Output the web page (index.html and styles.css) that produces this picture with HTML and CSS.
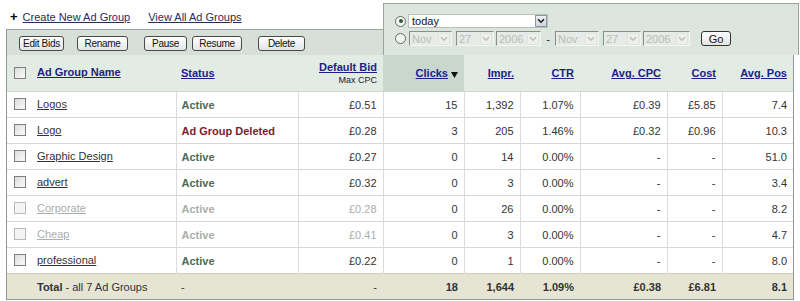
FILE: index.html
```html
<!DOCTYPE html>
<html>
<head>
<meta charset="utf-8">
<link rel="stylesheet" href="styles.css">
</head>
<body>
<div class="top">
  <div class="top-left">
    <div class="links">
      <span class="plus">+</span>
      <a class="toplink" href="#">Create New Ad Group</a>
      <a class="toplink second" href="#">View All Ad Groups</a>
    </div>
    <div class="toolbar">
      <span class="btn w-edit">Edit Bids</span>
      <span class="btn w-rename">Rename</span>
      <span class="btn w-pause">Pause</span>
      <span class="btn w-resume">Resume</span>
      <span class="btn w-delete">Delete</span>
    </div>
  </div>
  <div class="panel">
    <div class="prow">
      <span class="radio on"><span class="dot"></span></span>
      <span class="sel today"><span class="sel-text">today</span><span class="arrow"><svg width="8" height="6" viewBox="0 0 8 6"><path d="M1 1.2 L4 4.2 L7 1.2" fill="none" stroke="#222" stroke-width="1.6"/></svg></span></span>
    </div>
    <div class="prow second-row">
      <span class="radio"></span>
      <span class="sel dis w-mon"><span class="sel-text">Nov</span><span class="arrow dim"><svg width="8" height="6" viewBox="0 0 8 6"><path d="M1 1.2 L4 4.2 L7 1.2" fill="none" stroke="#bbb" stroke-width="1.4"/></svg></span></span>
      <span class="sel dis w-day"><span class="sel-text">27</span><span class="arrow dim"><svg width="8" height="6" viewBox="0 0 8 6"><path d="M1 1.2 L4 4.2 L7 1.2" fill="none" stroke="#bbb" stroke-width="1.4"/></svg></span></span>
      <span class="sel dis w-year"><span class="sel-text">2006</span><span class="arrow dim"><svg width="8" height="6" viewBox="0 0 8 6"><path d="M1 1.2 L4 4.2 L7 1.2" fill="none" stroke="#bbb" stroke-width="1.4"/></svg></span></span>
      <span class="dash">-</span>
      <span class="sel dis w-mon2"><span class="sel-text">Nov</span><span class="arrow dim"><svg width="8" height="6" viewBox="0 0 8 6"><path d="M1 1.2 L4 4.2 L7 1.2" fill="none" stroke="#bbb" stroke-width="1.4"/></svg></span></span>
      <span class="sel dis w-day"><span class="sel-text">27</span><span class="arrow dim"><svg width="8" height="6" viewBox="0 0 8 6"><path d="M1 1.2 L4 4.2 L7 1.2" fill="none" stroke="#bbb" stroke-width="1.4"/></svg></span></span>
      <span class="sel dis w-year2"><span class="sel-text">2006</span><span class="arrow dim"><svg width="8" height="6" viewBox="0 0 8 6"><path d="M1 1.2 L4 4.2 L7 1.2" fill="none" stroke="#bbb" stroke-width="1.4"/></svg></span></span>
      <span class="btn go">Go</span>
    </div>
  </div>
</div>
<div class="grid-wrap">
  <table class="grid">
    <colgroup>
      <col class="c-name"><col class="c-status"><col class="c-bid"><col class="c-clicks"><col class="c-impr"><col class="c-ctr"><col class="c-cpc"><col class="c-cost"><col class="c-pos">
    </colgroup>
    <thead>
      <tr>
        <th class="name"><span class="cb"></span><a href="#">Ad Group Name</a></th>
        <th class="left"><a href="#">Status</a></th>
        <th class="num"><a href="#">Default Bid</a><span class="sub">Max CPC</span></th>
        <th class="num sorted"><a href="#">Clicks</a><svg class="tri" width="7" height="7" viewBox="0 0 7 7"><path d="M0 1 L7 1 L3.5 7 Z" fill="#111"/></svg></th>
        <th class="num"><a href="#">Impr.</a></th>
        <th class="num"><a href="#">CTR</a></th>
        <th class="num"><a href="#">Avg. CPC</a></th>
        <th class="num"><a href="#">Cost</a></th>
        <th class="num"><a href="#">Avg. Pos</a></th>
      </tr>
    </thead>
    <tbody>
      <tr>
        <td class="name"><span class="cb"></span><a href="#">Logos</a></td>
        <td class="status active">Active</td>
        <td class="num">£0.51</td><td class="num">15</td><td class="num">1,392</td><td class="num">1.07%</td><td class="num">£0.39</td><td class="num">£5.85</td><td class="num">7.4</td>
      </tr>
      <tr>
        <td class="name"><span class="cb"></span><a href="#">Logo</a></td>
        <td class="status deleted">Ad Group Deleted</td>
        <td class="num">£0.28</td><td class="num">3</td><td class="num">205</td><td class="num">1.46%</td><td class="num">£0.32</td><td class="num">£0.96</td><td class="num">10.3</td>
      </tr>
      <tr>
        <td class="name"><span class="cb"></span><a href="#">Graphic Design</a></td>
        <td class="status active">Active</td>
        <td class="num">£0.27</td><td class="num">0</td><td class="num">14</td><td class="num">0.00%</td><td class="num">-</td><td class="num">-</td><td class="num">51.0</td>
      </tr>
      <tr>
        <td class="name"><span class="cb"></span><a href="#">advert</a></td>
        <td class="status active">Active</td>
        <td class="num">£0.32</td><td class="num">0</td><td class="num">3</td><td class="num">0.00%</td><td class="num">-</td><td class="num">-</td><td class="num">3.4</td>
      </tr>
      <tr class="paused">
        <td class="name"><span class="cb"></span><a href="#">Corporate</a></td>
        <td class="status active">Active</td>
        <td class="num bid">£0.28</td><td class="num">0</td><td class="num">26</td><td class="num">0.00%</td><td class="num">-</td><td class="num">-</td><td class="num">8.2</td>
      </tr>
      <tr class="paused">
        <td class="name"><span class="cb"></span><a href="#">Cheap</a></td>
        <td class="status active">Active</td>
        <td class="num bid">£0.41</td><td class="num">0</td><td class="num">3</td><td class="num">0.00%</td><td class="num">-</td><td class="num">-</td><td class="num">4.7</td>
      </tr>
      <tr>
        <td class="name"><span class="cb"></span><a href="#">professional</a></td>
        <td class="status active">Active</td>
        <td class="num">£0.22</td><td class="num">0</td><td class="num">1</td><td class="num">0.00%</td><td class="num">-</td><td class="num">-</td><td class="num">8.0</td>
      </tr>
    </tbody>
    <tfoot>
      <tr>
        <td class="name total-label"><b>Total</b> - all 7 Ad Groups</td>
        <td class="status plain">-</td>
        <td class="num plain">-</td><td class="num">18</td><td class="num">1,644</td><td class="num">1.09%</td><td class="num">£0.38</td><td class="num">£6.81</td><td class="num">8.1</td>
      </tr>
    </tfoot>
  </table>
</div>
</body>
</html>
```
FILE: styles.css
```css
html, body {
  margin: 0;
  padding: 0;
  background: #ffffff;
}
body {
  width: 800px;
  height: 301px;
  overflow: hidden;
  font-family: "Liberation Sans", Arial, sans-serif;
  font-size: 11px;
  color: #333;
}
a { color: inherit; }

/* ---------- top area ---------- */
.top {
  display: flex;
  height: 55px;
}
.top-left {
  width: 383px;
  display: flex;
  flex-direction: column;
}
.links {
  height: 29px;
  display: flex;
  align-items: center;
  padding-left: 10px;
  box-sizing: border-box;
  padding-top: 4px;
}
.plus {
  font-weight: bold;
  font-size: 13px;
  color: #000;
  margin-right: 5px;
}
.toplink {
  color: #2b2b5e;
  text-decoration: underline;
  font-size: 11px;
}
.toplink.second { margin-left: 18px; }

.toolbar {
  flex: 1;
  margin-left: 6px;
  border-top: 1px solid #9aa49c;
  border-left: 1px solid #8f9891;
  background: #d6e0d8;
  display: flex;
  align-items: flex-start;
  padding: 6px 0 0 12px;
}
.btn {
  display: inline-flex;
  align-items: center;
  justify-content: center;
  box-sizing: border-box;
  height: 15px;
  border: 1px solid #4a4a4a;
  border-radius: 3px;
  background: linear-gradient(#ffffff, #e2e4e6);
  font-size: 10px;
  letter-spacing: -0.3px;
  color: #111;
}
.w-edit { width: 45px; }
.w-rename { width: 51px; margin-left: 13px; }
.w-pause { width: 43px; margin-left: 16px; }
.w-resume { width: 50px; margin-left: 5px; }
.w-delete { width: 47px; margin-left: 16px; }

.panel {
  width: 416px;
  margin-top: 3px;
  box-sizing: border-box;
  border: 1px solid #9aa39c;
  border-bottom: none;
  background: #dce5de;
  padding: 10px 0 0 11px;
}
.prow {
  display: flex;
  align-items: center;
  height: 14px;
}
.prow.second-row {
  margin-top: 3px;
  height: 15px;
}
.radio {
  width: 11px;
  height: 11px;
  box-sizing: border-box;
  border: 1px solid #5d6a62;
  border-radius: 50%;
  background: #f4f7f5;
  display: inline-flex;
  align-items: center;
  justify-content: center;
  margin-right: 2px;
}
.radio.on { background: #f6f8f6; }
.dot {
  width: 4px;
  height: 4px;
  border-radius: 50%;
  background: #2f5a3a;
}
.sel {
  display: inline-flex;
  align-items: center;
  justify-content: space-between;
  box-sizing: border-box;
  height: 14px;
  font-size: 11px;
}
.sel.today {
  width: 140px;
  background: #fff;
  border: 1px solid #b7c2bb;
  padding-left: 3px;
  color: #111;
}
.arrow {
  width: 12px;
  height: 12px;
  box-sizing: border-box;
  display: inline-flex;
  align-items: center;
  justify-content: center;
  background: linear-gradient(#eef0f4, #cfd4dc);
  border: 1px solid #8e96a0;
}
.arrow.dim {
  background: #eef0ee;
  border-color: #e0e4e0;
  margin-right: 1px;
}
.sel.dis {
  height: 15px;
  background: #e7ebe7;
  border: 1px solid;
  border-color: #8a8e8a #f4f6f4 #f4f6f4 #8a8e8a;
  color: #b9bcb9;
  padding-left: 2px;
}
.w-mon { width: 43px; margin-left: 1px; }
.w-day { width: 38px; margin-left: 4px; }
.w-year { width: 45px; margin-left: 2px; }
.w-mon2 { width: 44px; }
.w-year2 { width: 47px; margin-left: 2px; }
.dash {
  width: 14px;
  text-align: center;
  color: #222;
}
.btn.go {
  width: 30px;
  margin-left: 11px;
  font-size: 11px;
  letter-spacing: 0;
  border-color: #333;
}

/* ---------- grid ---------- */
.grid-wrap {
  margin-left: 6px;
  width: 788px;
  box-sizing: border-box;
  border-left: 1px solid #8f9891;
  border-right: 1px solid #8f9891;
  border-bottom: 1px solid #8f9891;
}
.grid {
  width: 786px;
  table-layout: fixed;
  border-collapse: collapse;
  border-spacing: 0;
}
.c-name { width: 169px; }
.c-status { width: 122px; }
.c-bid { width: 85px; }
.c-clicks { width: 81px; }
.c-impr { width: 56px; }
.c-ctr { width: 60px; }
.c-cpc { width: 87px; }
.c-cost { width: 55px; }
.c-pos { width: 71px; }

.grid th {
  height: 36px;
  padding: 0 6px 0 5px;
  background: #e3ebe5;
  font-weight: bold;
  font-size: 11px;
  white-space: nowrap;
  border-bottom: 1px solid #cfd6d0;
}
.grid th a {
  color: #1b1f86;
  text-decoration: underline;
}
.grid th.left { text-align: left; }
.grid th.num { text-align: right; }
.grid th.sorted { background: #cad7cd; }
.grid th .sub {
  display: block;
  font-weight: normal;
  font-size: 9px;
  color: #222;
  margin-top: 2px;
}
.tri {
  margin-left: 3px;
  vertical-align: -1px;
}
.grid th.name,
.grid td.name {
  text-align: left;
  padding-left: 7px;
}
.cb {
  display: inline-block;
  width: 12px;
  height: 12px;
  box-sizing: border-box;
  border: 1px solid #7f7f7f;
  background: linear-gradient(135deg, #dcdcdc, #fbfbfb);
  vertical-align: middle;
  margin-right: 11px;
  position: relative;
  top: -1px;
}

.grid td {
  height: 25px;
  padding: 0 6px 0 5px;
  border-top: 1px solid #d7d7d7;
  border-left: 1px solid #dcdcdc;
  white-space: nowrap;
  color: #333;
}
.grid td:first-child { border-left: none; }
.grid td.num { text-align: right; }
.grid td.name a {
  color: #333;
  text-decoration: underline;
}
.grid td.status { font-weight: bold; }
.grid td.active { color: #4c6a55; }
.grid td.deleted { color: #7c1d2c; }

.grid tr.paused td.name a,
.grid tr.paused td.status,
.grid tr.paused td.bid { color: #a9adab; }
.grid tr.paused .cb { border-color: #b8b8b8; background: #f4f4f4; }

.grid tfoot td {
  background: #e6e5d4;
  font-weight: bold;
  border-left: none;
  border-top: 1px solid #cfcfc0;
}
.grid tfoot td.total-label {
  font-weight: normal;
  padding-left: 30px;
}
.grid tfoot td.plain { font-weight: normal; }
```
